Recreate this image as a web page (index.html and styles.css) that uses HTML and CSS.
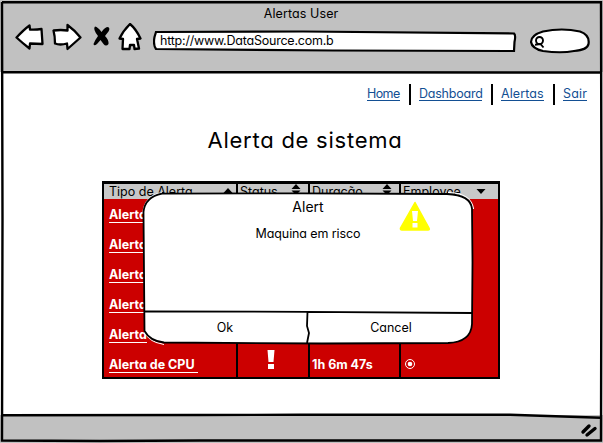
FILE: index.html
```html
<!DOCTYPE html>
<html lang="pt">
<head>
<meta charset="utf-8">
<title>Alertas User</title>
<link rel="stylesheet" href="styles.css">
</head>
<body>
<div class="window">
  <header class="chrome">
    <div class="window-title">Alertas User</div>
    <div class="toolbar">
      <svg class="nav-icons" width="128" height="30" viewBox="0 0 128 30">
        <g fill="#fff" stroke="#000" stroke-width="2.300" stroke-linejoin="round">
          <path d="M1.500 14.500Q9 6.500 14.500 2.500L15 6.500Q20 7 26.500 6L27.500 21 15 20.500 14.500 25.500Q8 20.500 1.500 14.500Z"/>
          <path d="M38.500 7.500Q46 6.500 52.500 7.500L52.500 2Q60 7.500 65.500 14.500L52.500 26 52 20.500Q45 22.500 40 20.500 40 13 38.500 7.500Z"/>
          <path d="M115 1Q121 6 125.500 15.500L122 16 124 25.500 119.500 26 119 22 115 22 114.500 26 107.500 26 108 16 104.500 15.500Q108 8 115 1Z"/>
        </g>
        <path d="M80 3.500Q83 4 86.500 9 90 4 93 4 95.500 5 93.500 8.500L90 13Q94 17 93.500 21 91 24 88.500 21L85.500 17 82 21Q79 23.500 78.500 21 80 17 83 13 77.500 6 80 3.500Z"/>
      </svg>
      <div class="address">
        <svg class="outline" width="364" height="24" viewBox="0 0 364 24"><path d="M3 2 150 1.500 361 3.500Q363 5 361.500 12L361 21 180 20.500 3 19Q0 15 1.500 7Z" fill="#fff" stroke="#000" stroke-width="2.200"/></svg>
        <span class="url">http://www.DataSource.com.b</span>
      </div>
      <svg class="search" width="62" height="26" viewBox="0 0 62 26">
        <path d="M14 3.500Q33 -.5 51 3.500 61 7 59.500 16 58.500 22 45 23 32 25.500 14 23 3 20.500 2 14 2 7 14 3.500Z" fill="#fff" stroke="#000" stroke-width="2.200"/>
        <circle cx="10.500" cy="12.500" r="3.500" fill="none" stroke="#000" stroke-width="1.900"/>
        <path d="M6 16.700 11.500 16 14.500 19.500" fill="none" stroke="#000" stroke-width="1.900"/>
      </svg>
    </div>
  </header>

  <main class="page">
    <nav class="links">
      <a class="home">Home</a><i></i><a class="dash">Dashboard</a><i></i><a class="alertas">Alertas</a><i></i><a class="sair">Sair</a>
    </nav>
    <h1>Alerta de sistema</h1>

    <div class="grid">
      <div class="row head">
        <div>Tipo de Alerta<svg class="sort" width="10" height="12" viewBox="0 0 10 12"><path d="M.500 9 5 4 9.500 9Z"/></svg></div>
        <div>Status<svg class="sort" width="10" height="12" viewBox="0 0 10 12"><path d="M.500 5 5 0 9.500 5ZM.500 6.500H9.500L5 11Z"/></svg></div>
        <div>Duração<svg class="sort" width="10" height="12" viewBox="0 0 10 12"><path d="M.500 5 5 0 9.500 5ZM.500 6.500H9.500L5 11Z"/></svg></div>
        <div>Employee<svg class="sort last" width="10" height="12" viewBox="0 0 10 12"><path d="M.500 3H9.500L5 8Z"/></svg></div>
      </div>
      <div class="row"><div><a>Alerta</a></div><div></div><div></div><div></div></div>
      <div class="row"><div><a>Alerta</a></div><div></div><div></div><div></div></div>
      <div class="row"><div><a>Alerta</a></div><div></div><div></div><div></div></div>
      <div class="row"><div><a>Alerta</a></div><div></div><div></div><div></div></div>
      <div class="row"><div><a>Alerta</a></div><div></div><div></div><div></div></div>
      <div class="row">
        <div><a>Alerta de CPU&nbsp;</a></div>
        <div class="mark"><svg width="8" height="20" viewBox="0 0 8 20"><path d="M.500 0H7.500L6.500 12H1.500ZM1 14H7V19H1Z" fill="#fff"/></svg></div>
        <div class="time">1h 6m 47s</div>
        <div class="radio"><svg width="12" height="12" viewBox="0 0 12 12"><circle cx="6" cy="6" r="4.500" fill="none" stroke="#fff" stroke-width="1"/><circle cx="6" cy="6" r="2.300" fill="#fff"/></svg></div>
      </div>
    </div>
  </main>

  <footer class="status"></footer>

  <svg class="frame" width="603" height="443" viewBox="0 0 603 443">
    <g fill="none" stroke="#000" stroke-width="2.400">
      <path d="M2 2.300 300 2.300 601 2.300 601.500 220 601 440.500 400 440.500 200 440.500 100 441 2 440.500 2.500 220 2 2Z"/>
      <path d="M2 72.300 300 72.300 601 72.500"/>
      <path d="M2 415.300 200 415 300 414.700 510 414.700 601 417.700"/>
    </g>
    <path d="M583 432 589 426M587 435 595 428.500" stroke="#000" stroke-width="3.400" stroke-linecap="round"/>
  </svg>

  <section class="dialog">
    <svg class="outline" width="332" height="154" viewBox="0 0 332 154">
      <path d="M20 1.700 160 1.300 305 2Q329 3 330 17L330.500 70 330 132Q329 150 306 151L180 151.500 22 150.500Q8 149 2.500 139L2 80 1.500 20Q3 5 20 1.700Z" fill="#fff"/>
      <path d="M2.500 140Q8 150.500 22 152.500M306 .5Q329 1 331.500 17M1 20Q3 4 20 .5" fill="none" stroke="#fff" stroke-width="1.200"/>
      <path d="M20 1.700 160 1.300 305 2Q329 3 330 17L330.500 70 330 132Q329 150 306 151L180 151.500 22 150.500Q8 149 2.500 139L2 80 1.500 20Q3 5 20 1.700Z" fill="none" stroke="#000" stroke-width="1.800"/>
      <path d="M2 119.500 165 119.800 330 121M165.500 120 165 134 167 141 165 151" fill="none" stroke="#000" stroke-width="1.800"/>
    </svg>
    <div class="dialog-title">Alert</div>
    <div class="message">Maquina em risco</div>
    <svg class="warning" width="32" height="30" viewBox="0 0 32 30"><path d="M16 1.500 30 27Q31 29 29 29H3Q1 29 1.500 27Z" fill="#ff0" stroke="#ff0" stroke-width="1.500" stroke-linejoin="round"/><path d="M13 10H19L18 20H14ZM13.500 22H18.500V26.500H13.500Z" fill="#fff"/></svg>
    <div class="actions"><span>Ok</span><span>Cancel</span></div>
  </section>
</div>
</body>
</html>
```
FILE: styles.css
```css
* { box-sizing: border-box; }
body {
  margin: 0;
  background: #fff;
  color: #000;
  font: 12.500px/16px Inter, "Liberation Sans", sans-serif;
  font-feature-settings: "cv11", "ss03";
}
.window {
  position: relative;
  display: grid;
  grid-template-rows: 72px 343px 28px;
  width: 603px;
  height: 443px;
  overflow: hidden;
}
.chrome, .status { background: #c1c1c1; }
.chrome { padding-top: 6px; }
.window-title { text-align: center; height: 17px; padding-right: 1px; letter-spacing: .1px; }
.toolbar { display: flex; padding-left: 15px; }
.nav-icons { flex: none; }
.address { position: relative; width: 364px; height: 24px; margin: 7px 0 0 10px; padding: 3px 0 0 7px; }
.outline { position: absolute; left: 0; top: 0; }
.url { position: relative; letter-spacing: -.22px; }
.search { margin: 5px 0 0 12px; }
.page { padding-top: 12px; }
.links { display: flex; justify-content: flex-end; height: 21px; padding-right: 16px; color: #134f93; }
.links a { height: 17px; border-bottom: 1px solid #134f93; white-space: nowrap; line-height: 19px; }
.links i { width: 2px; height: 21px; background: #000; margin: 0 8px 0 9px; }
.links .home { width: 33px; letter-spacing: -.6px; }
.links .dash { width: 63px; letter-spacing: -.22px; }
.links .alertas { width: 43px; letter-spacing: .1px; }
.links .sair { width: 24px; letter-spacing: .2px; }
h1 { margin: 21px 0 0; padding-left: 7px; height: 40px; text-align: center; font-size: 22px; line-height: 28px; font-weight: 400; letter-spacing: .75px; }
.grid { margin: 15px 0 0 102px; width: 398px; height: 198px; background: #c00; border: 2px solid #000; border-top-width: 3px; overflow: hidden; }
.row { display: grid; grid-template-columns: 132px 72px 91px 99px; height: 30px; color: #fff; font-weight: 700; }
.row > div { display: flex; align-items: center; padding-left: 5px; border-left: 2px solid #000; padding-top: 1px; }
.row > div:first-child { border-left: 0; }
.row a { border-bottom: 1px solid #fff; line-height: 15px; white-space: nowrap; }
.head { height: 15px; background: #c8c8c8; color: #000; font-weight: 400; }
.head > div { padding: 0 7px 0 2px; justify-content: space-between; }
.head > div:first-child { padding: 0 3px 0 5px; }
.head .last { margin: 0 5px 0 0; }
.sort { flex: none; margin-bottom: 4px; }
.row .mark { justify-content: center; padding: 0 5px 8px 0; }
.row .time { padding-left: 2px; }
.row .radio { padding: 0 0 0 3px; }
.frame { position: absolute; left: 0; top: 0; pointer-events: none; }
.dialog { position: absolute; left: 142px; top: 192px; width: 332px; height: 154px; text-align: center; padding-top: 7px; }
.dialog > div { position: relative; }
.dialog-title { font-size: 14px; height: 27px; }
.message { height: 87px; letter-spacing: -.1px; }
.warning { position: absolute; left: 257px; top: 9px; }
.actions { display: grid; grid-template-columns: 166px 166px; padding-top: 7px; }
```
